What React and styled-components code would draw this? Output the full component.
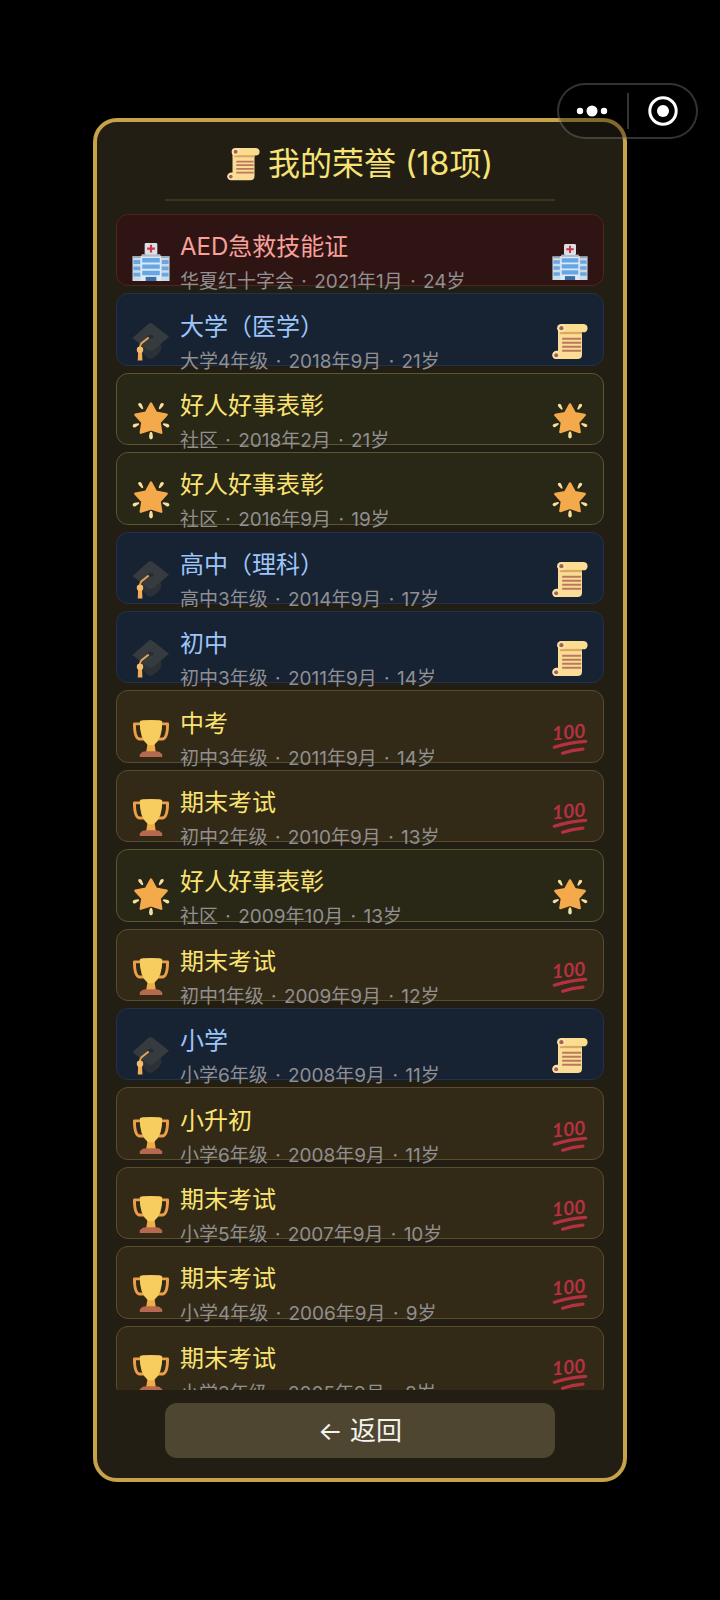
import React from "react";
import styled, { createGlobalStyle, css } from "styled-components";

const GlobalStyle = createGlobalStyle`
  * { box-sizing: border-box; }
  body {
    margin: 0;
    background: #000;
    font-family: Inter, "Noto Sans CJK SC", sans-serif;
  }
`;

const tones = {
  red: { text: "#f8a09a", fill: "#2f1414", line: "#4f261d" },
  blue: { text: "#9cc5fb", fill: "#172233", line: "#22324b" },
  green: { text: "#fae372", fill: "#292716", line: "#5b562d" },
  amber: { text: "#fae372", fill: "#322a17", line: "#5c4d2a" },
};

const Screen = styled.main`
  position: relative;
  min-height: 1600px;
  padding: 118px 93px;
`;

const Panel = styled.section`
  display: flex;
  flex-direction: column;
  align-items: center;
  padding: 20px 19px;
  border: 4px solid #c6a249;
  border-radius: 24px;
  background: #231e13;
`;

const Heading = styled.h1`
  display: flex;
  align-items: center;
  gap: 8px;
  margin: 0;
  font-size: 32px;
  line-height: 44px;
  font-weight: 400;
  color: #f6e376;
  white-space: nowrap;
`;

const Divider = styled.hr`
  width: 80%;
  height: 2px;
  margin: 13px 0;
  border: 0;
  background: #3d3420;
`;

const Scroller = styled.div`
  width: 100%;
  height: 1176px;
  overflow-y: auto;
  scrollbar-width: none;
`;

const List = styled.ul`
  display: grid;
  grid-auto-rows: minmax(0, 1fr);
  gap: 7px;
  height: 1184px;
  margin: 0;
  padding: 0;
  list-style: none;
`;

const Row = styled.li`
  display: flex;
  align-items: center;
  gap: 10px;
  padding: 24px 15px 0;
  border-radius: 12px;
  ${({ $tone }) => css`
    color: ${tones[$tone].text};
    background: ${tones[$tone].fill};
    border: 1px solid ${tones[$tone].line};
  `}
`;

const RowText = styled.div`
  flex: 1;
  min-width: 0;
  padding-top: 4px;
  white-space: nowrap;
`;

const RowTitle = styled.h2`
  margin: 0;
  font-size: 24px;
  line-height: 36px;
  font-weight: 400;
`;

const RowMeta = styled.p`
  margin: 0;
  font-size: 19px;
  line-height: 34px;
  color: #918f90;
`;

const Dot = styled.span`
  margin: 0 2px;
`;

const Icon = styled.svg`
  flex: none;
  display: block;
  overflow: visible;
  width: ${({ $size }) => $size}px;
  height: ${({ $size }) => $size}px;
`;

const BackButton = styled.button`
  width: 80%;
  height: 55px;
  margin-top: 13px;
  padding: 0;
  border: 0;
  border-radius: 12px;
  background: #4f4631;
  color: #f5f3ee;
  font-family: inherit;
  font-size: 26px;
  line-height: 36px;
  cursor: pointer;
`;

const Capsule = styled.div`
  position: absolute;
  top: 83px;
  right: 22px;
  display: flex;
  align-items: center;
  width: 141px;
  height: 56px;
  border: 2px solid rgba(255, 255, 255, 0.2);
  border-radius: 28px;
  background: rgba(0, 0, 0, 0.35);
`;

const CapsuleButton = styled.button`
  flex: 1 1 0;
  display: flex;
  align-items: center;
  justify-content: center;
  height: 36px;
  padding: 0 2px 0 0;
  border: 0;
  background: none;
  & + & {
    padding: 0 0 0 2px;
    border-left: 2px solid rgba(255, 255, 255, 0.2);
  }
`;

const drawings = {
  scroll: (
    <>
      <path d="M6 3h26v30q0 5-5 5H4q-4-1-4-4.500t4-4.500h2z" fill="#fbdc97" />
      <path d="M10 0h23q5 0 5 4.500T33.500 9H9z" fill="#fcdc91" />
      <path d="M8 8.500h24v2.500H8z" fill="#dba85f" />
      <circle cx="9.500" cy="4.500" r="4.500" fill="#fbe3ae" />
      <circle cx="9.700" cy="4.500" r="2.300" fill="#a4644c" />
      <circle cx="4" cy="33.800" r="4" fill="#fbe3ae" />
      <circle cx="4" cy="33.800" r="2.200" fill="#a4644c" />
      <path d="M10.500 16h20.500M10.500 20.300h20.500M10.500 24.600h20.500M10.500 29h20.500" stroke="#b9795a" strokeWidth="2" />
    </>
  ),
  hospital: (
    <>
      <path d="M0 13.500h38V39H0z" fill="#cddbe8" />
      <path d="M0 13.500h9v2H0zM29 13.500h9v2h-9z" fill="#9aa9b7" />
      <path d="M1 17.500h7v4H1zM1 24h7v4H1zM1 30.500h7v4H1zM30 17.500h7v4h-7zM30 24h7v4h-7zM30 30.500h7v4h-7z" fill="#6ba7df" />
      <path d="M8.500 13h21v26h-21z" fill="#dde9f4" />
      <path d="M9.500 11.500h19V14h-19z" fill="#b1bdc9" />
      <rect x="12.500" y="0" width="13" height="12" rx="1.500" fill="#dcdfe5" />
      <path d="M19 1.800v8M15 5.800h8" stroke="#c93747" strokeWidth="2.200" />
      <path d="M10 15.500h18v4.500H10zM10 22h18v4.500H10zM10 28.500h18v4.500H10z" fill="#65a6e6" />
      <path d="M13.500 34.800h11V39h-11z" fill="#3c6da5" />
    </>
  ),
  cap: (
    <>
      <path d="M9 20L27 17l3 8q-1 7-10 11.500-3 1.200-5-1L9 29z" fill="#2b3134" />
      <path d="M0 15.500L16.500.8q2-1.400 4 0L37.500 14 22 27.500q-4 2.500-7 0z" fill="#353b3e" />
      <ellipse cx="18.500" cy="14" rx="3" ry="2" fill="#272d31" />
      <path d="M16 15.500L9 21q-1.500 2-1.500 5" fill="none" stroke="#e5a451" strokeWidth="2" strokeLinecap="round" />
      <path d="M5.800 29h4l.4 9.500H5.400z" fill="#efad55" />
      <circle cx="7.700" cy="27.500" r="3.300" fill="#f7bd69" />
    </>
  ),
  star: (
    <>
      <path d="M19 1.500l5.200 9.500 10.800 2-7.200 8 1.700 10.500L19 28 8.500 31.500 10.200 21 3 13l10.800-2z" fill="#f4aa4b" stroke="#f4aa4b" strokeWidth="2.500" strokeLinejoin="round" />
      <path d="M6 1.500q2-1.500 3.500.8l1.500 3.800q0 2-1.800.8L6.500 4Q5.500 2.500 6 1.500zM32 1.500q-2-1.500-3.500.8L27 6.100q0 2 1.800.8L31.500 4q1-1.500.5-2.500zM.2 25q-.5-2 2-2.600l4-.6q1.500.5.2 1.800L3 26q-2 .7-2.800-1zM37.800 25q.5-2-2-2.600l-4-.6q-1.500.5-.2 1.800L35 26q2 .7 2.800-1zM19 30.500q1 0 1.600 2l.4 3.500q-.3 2.500-2 2.500T17 36l.4-3.500q.6-2 1.600-2z" fill="#f8df9d" />
    </>
  ),
  trophy: (
    <>
      <path d="M9 4H2q0 15 5.500 15.500H12M29 4h7q0 15-5.500 15.500H26" fill="none" stroke="#ec9e48" strokeWidth="3" strokeLinejoin="round" />
      <path d="M15.500 24h7l1.500 9H14z" fill="#efad49" />
      <path d="M7.500 1.500Q8 0 19 0t11.500 1.500Q31 19 22 26h-6Q7 19 7.500 1.500z" fill="#f8cd5f" />
      <path d="M9 34q1-2 5-2h10q4 0 5 2l1.500 1v3h-23v-3z" fill="#b7694f" />
    </>
  ),
  hundred: (
    <>
      <text x="0" y="21" transform="rotate(-5 0 21)" fontFamily="Lato, sans-serif" fontSize="21" fontStyle="italic" fontWeight="700" fill="#b5313f">100</text>
      <path d="M2 28.500Q18 23 36 22M11 35q10-3.500 22-4.500" fill="none" stroke="#b5313f" strokeWidth="3.500" strokeLinecap="round" />
    </>
  ),
};

const Emoji = ({ name, size }) => (
  <Icon $size={size} viewBox="0 0 38 39" aria-hidden="true">
    {drawings[name]}
  </Icon>
);

const kinds = {
  aid: { tone: "red", left: "hospital", right: "hospital" },
  school: { tone: "blue", left: "cap", right: "scroll" },
  deed: { tone: "green", left: "star", right: "star" },
  exam: { tone: "amber", left: "trophy", right: "hundred" },
};

const honors = [
  ["aid", "AED急救技能证", "华夏红十字会", "2021年1月", "24岁"],
  ["school", "大学（医学）", "大学4年级", "2018年9月", "21岁"],
  ["deed", "好人好事表彰", "社区", "2018年2月", "21岁"],
  ["deed", "好人好事表彰", "社区", "2016年9月", "19岁"],
  ["school", "高中（理科）", "高中3年级", "2014年9月", "17岁"],
  ["school", "初中", "初中3年级", "2011年9月", "14岁"],
  ["exam", "中考", "初中3年级", "2011年9月", "14岁"],
  ["exam", "期末考试", "初中2年级", "2010年9月", "13岁"],
  ["deed", "好人好事表彰", "社区", "2009年10月", "13岁"],
  ["exam", "期末考试", "初中1年级", "2009年9月", "12岁"],
  ["school", "小学", "小学6年级", "2008年9月", "11岁"],
  ["exam", "小升初", "小学6年级", "2008年9月", "11岁"],
  ["exam", "期末考试", "小学5年级", "2007年9月", "10岁"],
  ["exam", "期末考试", "小学4年级", "2006年9月", "9岁"],
  ["exam", "期末考试", "小学3年级", "2005年9月", "8岁"],
];

export default function App() {
  return (
    <Screen>
      <GlobalStyle />
      <Panel>
        <Heading>
          <Emoji name="scroll" size={33} />
          我的荣誉 (18项)
        </Heading>
        <Divider />
        <Scroller>
          <List>
            {honors.map(([kind, title, place, date, age], i) => (
              <Row key={i} $tone={kinds[kind].tone}>
                <Emoji name={kinds[kind].left} size={38} />
                <RowText>
                  <RowTitle>{title}</RowTitle>
                  <RowMeta>
                    {place}
                    <Dot> · </Dot>
                    {date}
                    <Dot> · </Dot>
                    {age}
                  </RowMeta>
                </RowText>
                <Emoji name={kinds[kind].right} size={36} />
              </Row>
            ))}
          </List>
        </Scroller>
        <BackButton type="button">← 返回</BackButton>
      </Panel>
      <Capsule>
        <CapsuleButton type="button" aria-label="更多">
          <svg width="32" height="12" viewBox="0 0 32 12" fill="#fff">
            <circle cx="4" cy="6" r="3.200" />
            <circle cx="16" cy="6" r="5.500" />
            <circle cx="28" cy="6" r="3.200" />
          </svg>
        </CapsuleButton>
        <CapsuleButton type="button" aria-label="关闭">
          <svg width="30" height="30" viewBox="0 0 30 30">
            <circle cx="15" cy="15" r="13.200" fill="none" stroke="#fff" strokeWidth="3" />
            <circle cx="15" cy="15" r="6" fill="#fff" />
          </svg>
        </CapsuleButton>
      </Capsule>
    </Screen>
  );
}
